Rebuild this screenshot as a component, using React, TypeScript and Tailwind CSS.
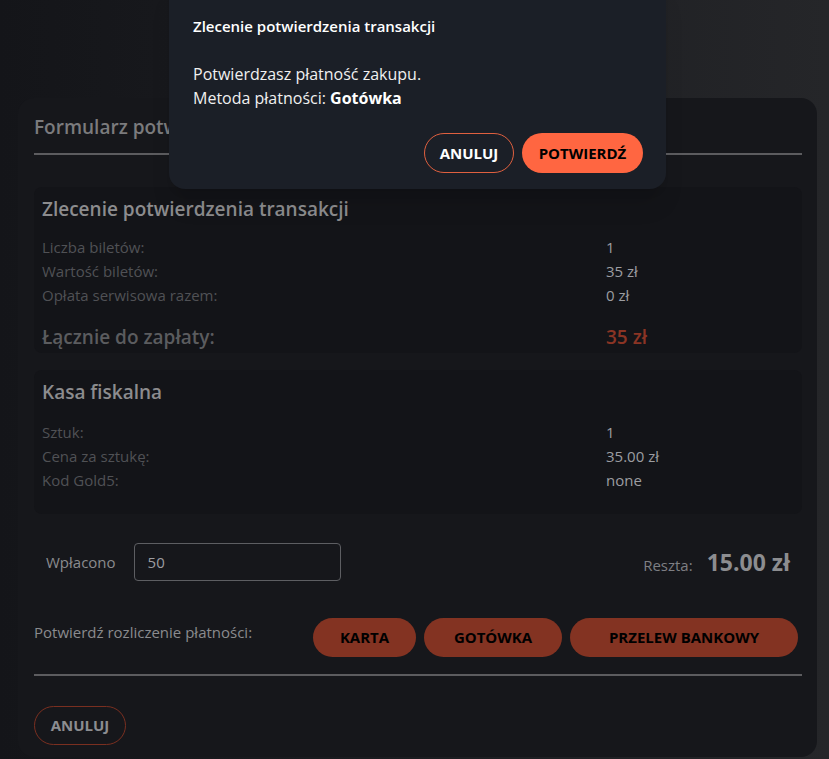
import React from "react";

const font = { fontFamily: '"Open Sans", "Noto Sans", sans-serif' };

function Row({ label, value }: { label: string; value: string }) {
  return (
    <div className="grid h-6 grid-cols-[564px_1fr] items-center text-[15px]">
      <span className="text-[#505155]">{label}</span>
      <span className="text-[#9c9da1]">{value}</span>
    </div>
  );
}

function Section({
  title,
  children,
  className,
}: {
  title: string;
  children: React.ReactNode;
  className: string;
}) {
  return (
    <div className={`rounded-lg bg-[#131418] px-2 pt-[7px] ${className}`}>
      <h3 className="text-[19px] font-semibold leading-[30px] text-[#8c8c8e]">{title}</h3>
      <div className="mt-[11px]">{children}</div>
    </div>
  );
}

export default function App() {
  return (
    <div
      className="relative min-h-[759px] overflow-hidden bg-gradient-to-r from-[#141519] via-[#1c1d21] to-[#252629] pl-[18px] pr-[12px] pt-[98px]"
      style={font}
    >
      <div className="h-[659px] rounded-2xl bg-[#16171b] pl-4 pr-[15px] pt-[14px]">
        <h2 className="text-[19px] font-semibold leading-[30px] text-[#7b7b7d]">
          Formularz potwierdzenia płatności
        </h2>
        <div className="mt-[11px] h-[2px] bg-[#5c5c5f]" />

        <div className="mt-[32px] flex flex-col gap-[17px]">
          <Section title="Zlecenie potwierdzenia transakcji" className="pb-[2px]">
            <Row label="Liczba biletów:" value="1" />
            <Row label="Wartość biletów:" value="35 zł" />
            <Row label="Opłata serwisowa razem:" value="0 zł" />
            <div className="mt-[16px] grid grid-cols-[564px_1fr] items-center text-[19px] font-semibold leading-[28px]">
              <span className="text-[#5b5c5f]">Łącznie do zapłaty:</span>
              <span className="text-[#8b3424]">35 zł</span>
            </div>
          </Section>
          <Section title="Kasa fiskalna" className="pb-[22px]">
            <div className="pt-[2px]">
              <Row label="Sztuk:" value="1" />
              <Row label="Cena za sztukę:" value="35.00 zł" />
              <Row label="Kod Gold5:" value="none" />
            </div>
          </Section>
        </div>

        <div className="mt-[29px] flex items-center justify-between pl-3 pr-[12px]">
          <div className="flex items-center gap-[18px]">
            <span className="text-[15px] text-[#8a8b8e]">Wpłacono</span>
            <div className="flex h-[38px] w-[207px] items-center rounded border border-[#5d5e62] px-[13px] text-[15px] text-[#9c9da1]">
              50
            </div>
          </div>
          <div className="flex items-baseline gap-[14px]">
            <span className="text-[15px] text-[#7e7f83]">Reszta:</span>
            <span className="text-[23px] font-bold text-[#8c8d90]">15.00 zł</span>
          </div>
        </div>

        <div className="mt-[37px] flex items-start">
          <span className="mt-[3px] w-[279px] text-[15px] text-[#8a8b8e]">
            Potwierdź rozliczenie płatności:
          </span>
          <div className="flex gap-2">
            <button className="h-[39px] w-[103px] rounded-full bg-[#833322] text-[15px] font-bold text-black">
              KARTA
            </button>
            <button className="h-[39px] w-[138px] rounded-full bg-[#833322] text-[15px] font-bold text-black">
              GOTÓWKA
            </button>
            <button className="h-[39px] w-[228px] rounded-full bg-[#833322] text-[15px] font-bold text-black">
              PRZELEW BANKOWY
            </button>
          </div>
        </div>

        <div className="mt-[17px] h-[2px] bg-[#5c5c5f]" />

        <button className="mt-[30px] h-[39px] w-[92px] rounded-full border border-[#7a2f20] text-[15px] font-bold text-[#8c8d90]">
          ANULUJ
        </button>
      </div>

      <div className="absolute left-[169px] top-[-22px] w-[497px] rounded-2xl bg-[#1b1f27] pl-6 pr-[23px] pt-[38px] pb-4 shadow-xl">
        <h4 className="text-[15px] font-semibold leading-5 text-white">
          Zlecenie potwierdzenia transakcji
        </h4>
        <div className="mt-[26px] text-[16px] leading-6 text-[#f0f0f0]">
          <p>Potwierdzasz płatność zakupu.</p>
          <p>
            Metoda płatności: <b className="font-bold text-white">Gotówka</b>
          </p>
        </div>
        <div className="mt-[23px] flex justify-end gap-2">
          <button className="h-10 w-[90px] rounded-full border border-[#e0603f] text-[15px] font-bold text-white">
            ANULUJ
          </button>
          <button className="h-10 w-[121px] rounded-full bg-[#ff6641] text-[15px] font-bold text-black">
            POTWIERDŹ
          </button>
        </div>
      </div>
    </div>
  );
}
